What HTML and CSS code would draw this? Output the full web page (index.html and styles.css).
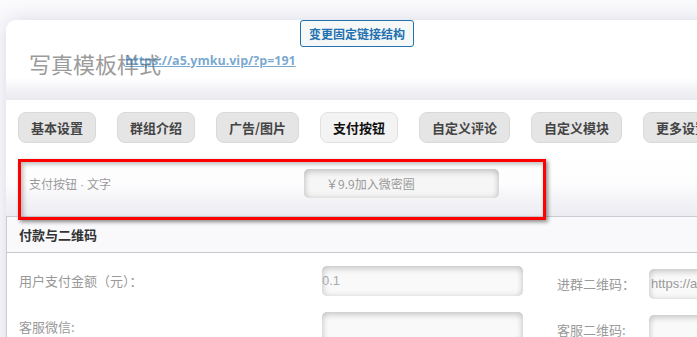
FILE: index.html
```html
<!DOCTYPE html>
<html lang="zh-CN">
<head>
<meta charset="utf-8">
<title>写真模板样式</title>
<link rel="stylesheet" href="styles.css">
</head>
<body>
<div class="page">
  <div class="card">
    <header class="head">
      <div class="btnrow"><button class="permabtn">变更固定链接结构</button></div>
      <div class="titlerow">
        <h1 class="title">写真模板样式</h1>
        <a class="link" href="#">https://a5.ymku.vip/?p=191</a>
      </div>
    </header>
    <nav class="tabs">
      <span class="tab">基本设置</span>
      <span class="tab">群组介绍</span>
      <span class="tab">广告/图片</span>
      <span class="tab active">支付按钮</span>
      <span class="tab">自定义评论</span>
      <span class="tab">自定义模块</span>
      <span class="tab">更多设置</span>
    </nav>
    <div class="hlrow">
      <div class="highlight">
        <span class="hl-label">支付按钮<span class="dot">·</span>文字</span>
        <div class="hl-input">￥9.9加入微密圈</div>
      </div>
    </div>
    <section class="panel">
      <div class="panel-head">付款与二维码</div>
      <div class="panel-body">
        <div class="frow">
          <div class="fcol">
            <span class="flabel">用户支付金额（元）：</span>
            <div class="finput">0.1</div>
          </div>
          <div class="fcol2">
            <span class="flabel2">进群二维码：</span>
            <div class="finput narrow">https://a5.ymku.vip/</div>
          </div>
        </div>
        <div class="frow">
          <div class="fcol">
            <span class="flabel">客服微信:</span>
            <div class="finput"></div>
          </div>
          <div class="fcol2">
            <span class="flabel2">客服二维码:</span>
            <div class="finput narrow"></div>
          </div>
        </div>
      </div>
    </section>
  </div>
</div>
</body>
</html>
```

FILE: styles.css
```css
html, body {
  margin: 0;
  padding: 0;
}
body {
  width: 697px;
  height: 337px;
  overflow: hidden;
  background: #fbfbfd;
  font-family: "Noto Sans CJK SC", "Noto Sans", sans-serif;
}
.page {
  padding: 20px 0 0 6px;
}
.card {
  background: #fff;
  border-top-left-radius: 10px;
  box-shadow: 0 0 20px rgba(70, 70, 130, 0.2);
  width: 760px;
  height: 340px;
}
.head {
  height: 80px;
  box-sizing: border-box;
  background: linear-gradient(to bottom, #fff 0%, #fff 72%, #e9e9ef 100%);
  border-top-left-radius: 10px;
}
.btnrow {
  padding-left: 294px;
  height: 27px;
}
.permabtn {
  display: block;
  width: 114px;
  height: 27px;
  margin: 0;
  padding: 0;
  border: 1px solid #2271b1;
  border-radius: 3px;
  background: #f6f7f7;
  color: #2271b1;
  font-family: "Noto Sans CJK SC", sans-serif;
  font-size: 12px;
  font-weight: 700;
  line-height: 25px;
}
.titlerow {
  position: relative;
  padding-left: 23px;
  margin-top: 1px;
}
.title {
  margin: 0;
  font-size: 22px;
  line-height: 30px;
  font-weight: 400;
  color: #9b9b9b;
}
.link {
  position: absolute;
  left: 119px;
  top: 4px;
  font-family: "Open Sans", "Noto Sans", sans-serif;
  font-size: 12.5px;
  font-weight: 700;
  line-height: 18px;
  color: rgba(34, 113, 177, 0.62);
  text-decoration: underline;
}
.tabs {
  display: flex;
  gap: 21px;
  padding: 12px 0 13px 12px;
  white-space: nowrap;
}
.tab {
  flex: none;
  height: 31px;
  box-sizing: border-box;
  padding: 0 12px;
  border: 1px solid #d9d9d9;
  border-radius: 8px;
  background: #e5e5e5;
  color: #444;
  font-size: 13px;
  font-weight: 700;
  line-height: 29px;
}
.tab.active {
  background: #f3f3f3;
  color: #111;
  border-color: #e0e0e0;
}
.hlrow {
  height: 61px;
  padding-top: 3px;
  box-sizing: border-box;
  border-bottom: 1px solid #cbcbd3;
  background: linear-gradient(to bottom, #fff 0%, #fdfdfe 45%, #ebebf1 100%);
  position: relative;
  z-index: 2;
}
.highlight {
  margin-left: 12px;
  width: 528px;
  height: 61px;
  box-sizing: border-box;
  border: 3px solid #ff0000;
  box-shadow: 2px 2px 4px rgba(0, 0, 0, 0.45), inset 2px 2px 5px rgba(0, 0, 0, 0.28);
  display: flex;
  align-items: flex-start;
  padding: 7px 0 0 8px;
}
.hl-label {
  width: 275px;
  flex: none;
  font-size: 12px;
  line-height: 29px;
  color: #9a9a9a;
}
.dot {
  font-family: "Liberation Sans", sans-serif;
  padding: 0 3px;
}
.hl-input {
  width: 195px;
  height: 29px;
  box-sizing: border-box;
  padding-left: 22px;
  border-radius: 5px;
  background: #f6f6f6;
  box-shadow: inset 0 3px 6px rgba(0, 0, 0, 0.14), inset 0 0 7px rgba(0, 0, 0, 0.14);
  font-size: 12px;
  line-height: 29px;
  color: #999;
}
.panel {
  border-left: 1px solid #c9cdd6;
}
.panel-head {
  height: 36px;
  box-sizing: border-box;
  border-bottom: 1px solid #c8c8c8;
  background: #f9f9fb;
  padding-left: 12px;
  font-size: 13px;
  font-weight: 700;
  line-height: 35px;
  color: #333;
}
.panel-body {
  padding: 13px 0 0 12px;
  display: flex;
  flex-direction: column;
  gap: 13px;
}
.frow {
  display: flex;
  align-items: flex-start;
}
.fcol {
  display: flex;
  align-items: center;
  width: 504px;
  flex: none;
}
.flabel {
  width: 303px;
  flex: none;
  font-size: 13px;
  line-height: 30px;
  color: #999;
}
.fcol2 {
  display: flex;
  align-items: center;
  margin-left: 34px;
  margin-top: 3px;
}
.flabel2 {
  width: 92px;
  flex: none;
  font-size: 13px;
  line-height: 30px;
  color: #999;
}
.finput {
  width: 201px;
  height: 30px;
  flex: none;
  box-sizing: border-box;
  border-radius: 5px;
  background: #f9f9f9;
  box-shadow: inset 0 3px 6px rgba(0, 0, 0, 0.14), inset 0 0 7px rgba(0, 0, 0, 0.12);
  font-family: "Liberation Sans", Arial, sans-serif;
  font-size: 13px;
  line-height: 30px;
  color: #aaa;
  white-space: nowrap;
  overflow: hidden;
}
.finput.narrow {
  width: 120px;
  padding-left: 2px;
  color: #999;
}
```
